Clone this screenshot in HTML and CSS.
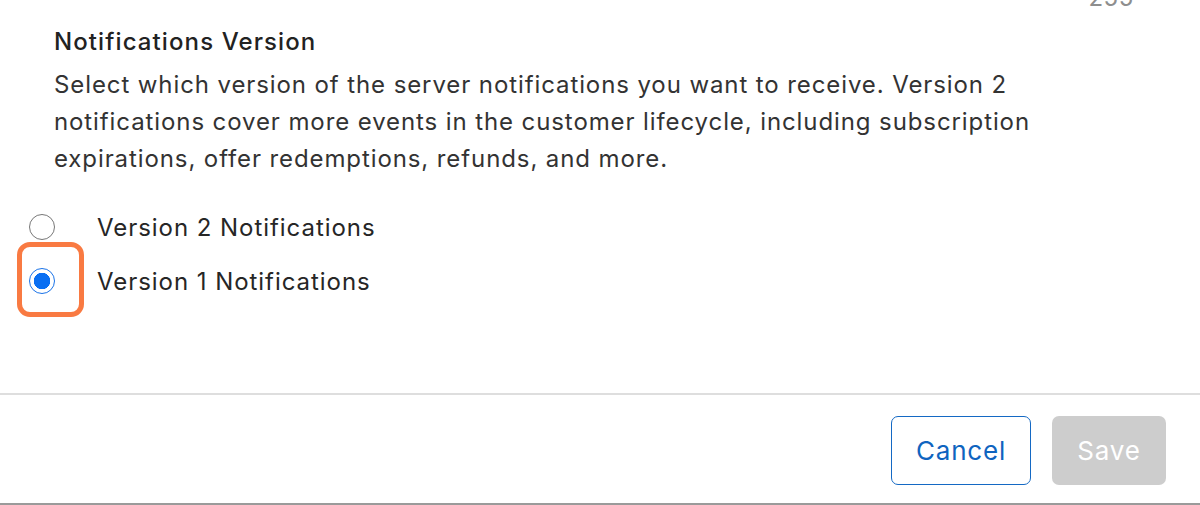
FILE: index.html
```html
<!DOCTYPE html>
<html lang="en">
<head>
    <meta charset="UTF-8">
    <title>Notifications Version</title>
    <link rel="stylesheet" href="styles.css">
</head>
<body>
    <div class="dialog">
        <div class="dialog-body">
            <div class="char-count">255</div>

            <div class="field">
                <h2>Notifications Version</h2>
                <p class="help">Select which version of the server notifications you want to receive. Version 2 notifications cover more events in the customer lifecycle, including subscription expirations, offer redemptions, refunds, and more.</p>
            </div>

            <div class="radio-group">
                <label class="radio-row">
                    <span class="radio-wrap">
                        <input type="radio" name="version" value="2">
                    </span>
                    <span class="radio-label">Version 2 Notifications</span>
                </label>
                <label class="radio-row">
                    <span class="radio-wrap highlight">
                        <input type="radio" name="version" value="1" checked>
                    </span>
                    <span class="radio-label">Version 1 Notifications</span>
                </label>
            </div>
        </div>

        <div class="dialog-footer">
            <button class="btn btn-cancel">Cancel</button>
            <button class="btn btn-save" disabled>Save</button>
        </div>
    </div>
</body>
</html>
```

FILE: styles.css
```css
*, *::before, *::after {
    margin: 0;
    padding: 0;
    box-sizing: border-box;
}

body {
    font-family: Inter, "Liberation Sans", Arial, sans-serif;
    background: #fff;
    color: #262626;
    height: 505px;
    overflow: hidden;
}

.dialog {
    height: 505px;
    display: flex;
    flex-direction: column;
    border-bottom: 2px solid #9a9a9a;
}

.dialog-body {
    flex: 1;
    padding: 0 54px;
}

.char-count {
    text-align: right;
    margin-top: -16px;
    padding-right: 12px;
    font-size: 24px;
    line-height: 28px;
    letter-spacing: 0.6px;
    color: #8e8e8e;
}

.field h2 {
    margin-top: 12px;
    font-size: 24px;
    font-weight: 500;
    line-height: 36px;
    letter-spacing: 1.1px;
    color: #222;
}

.help {
    margin-top: 6px;
    font-size: 24px;
    line-height: 37px;
    letter-spacing: 0.9px;
    color: #333;
    max-width: 1010px;
}

.radio-group {
    margin-top: 28px;
    margin-left: -25px;
    display: flex;
    flex-direction: column;
    gap: 10px;
}

.radio-row {
    display: flex;
    align-items: center;
    height: 44px;
    gap: 42px;
}

.radio-wrap {
    width: 26px;
    height: 26px;
    position: relative;
}

/* orange highlight drawn over the selected radio */
.radio-wrap.highlight::after {
    content: "";
    position: absolute;
    left: -12px;
    top: -26px;
    width: 67px;
    height: 75px;
    border: 5px solid #f97a42;
    border-radius: 13px;
}

.radio-wrap input {
    appearance: none;
    display: block;
    width: 26px;
    height: 26px;
    border: 1.5px solid #777;
    border-radius: 50%;
    background: #fff;
    margin: 0;
}

.radio-wrap input:checked {
    border: 1.5px solid #1a73e8;
    background: radial-gradient(circle, #0a6ff2 0 8px, #fff 8.5px);
}

.radio-label {
    font-size: 24px;
    letter-spacing: 0.95px;
    color: #262626;
}

.dialog-footer {
    border-top: 2px solid #dedede;
    height: 110px;
    display: flex;
    justify-content: flex-end;
    align-items: flex-start;
    gap: 21px;
    padding: 21px 34px 0 0;
}

.btn {
    height: 69px;
    border-radius: 7px;
    font-family: Inter, "Liberation Sans", Arial, sans-serif;
    font-size: 26px;
    letter-spacing: 0.8px;
    cursor: pointer;
}

.btn-cancel {
    width: 140px;
    background: #fff;
    border: 1.5px solid #1469c4;
    color: #0f64bf;
}

.btn-save {
    width: 114px;
    background: #cdcdcd;
    border: none;
    color: #fff;
}
```
